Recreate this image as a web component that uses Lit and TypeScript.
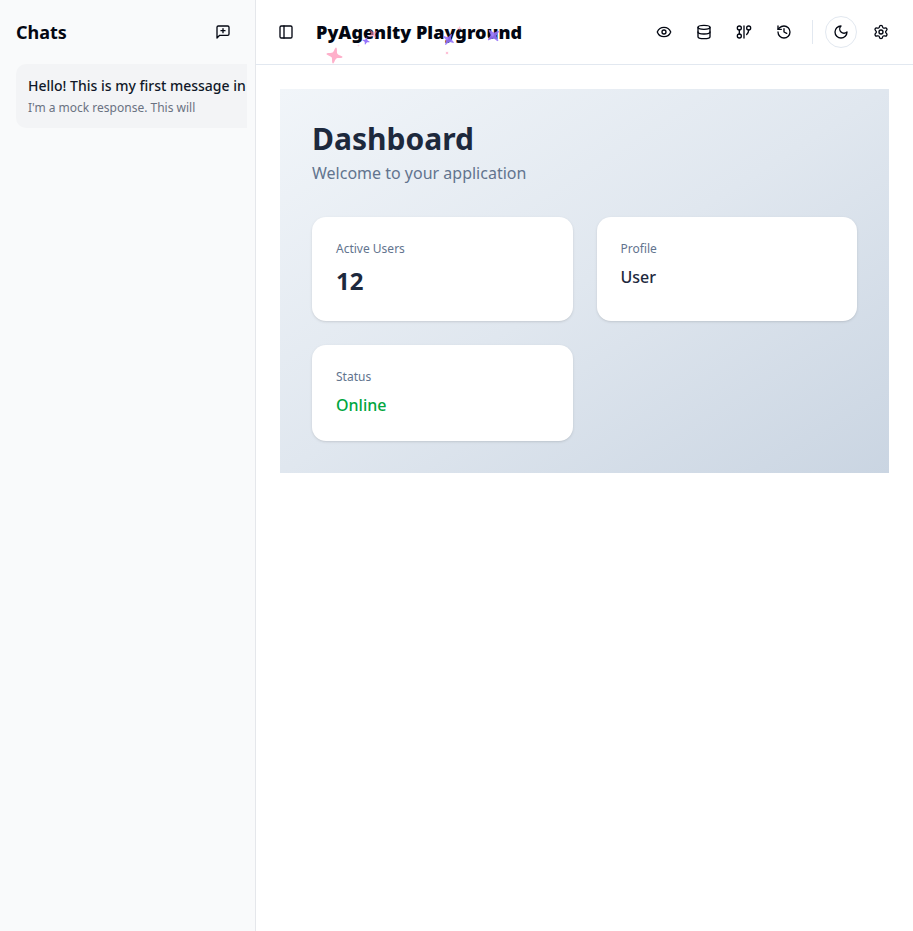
import { LitElement, html, css, svg } from "lit";
import { customElement } from "lit/decorators.js";
import { styleMap } from "lit/directives/style-map.js";

const icons = {
  newChat: svg`<path d="M21 15a2 2 0 0 1-2 2H7l-4 4V5a2 2 0 0 1 2-2h14a2 2 0 0 1 2 2z"/><path d="M12 7v6"/><path d="M9 10h6"/>`,
  panel: svg`<rect width="18" height="18" x="3" y="3" rx="2"/><path d="M9 3v18"/>`,
  eye: svg`<path d="M2.062 12.348a1 1 0 0 1 0-.696 10.75 10.75 0 0 1 19.876 0 1 1 0 0 1 0 .696 10.75 10.75 0 0 1-19.876 0"/><circle cx="12" cy="12" r="3"/>`,
  database: svg`<ellipse cx="12" cy="5" rx="9" ry="3"/><path d="M3 5V19A9 3 0 0 0 21 19V5"/><path d="M3 12A9 3 0 0 0 21 12"/>`,
  graph: svg`<circle cx="5" cy="6" r="3"/><path d="M5 9v6"/><circle cx="5" cy="18" r="3"/><path d="M12 3v18"/><circle cx="19" cy="6" r="3"/><path d="M16 15.7A9 9 0 0 0 19 9"/>`,
  history: svg`<path d="M3 12a9 9 0 1 0 9-9 9.75 9.75 0 0 0-6.74 2.74L3 8"/><path d="M3 3v5h5"/><path d="M12 7v5l4 2"/>`,
  moon: svg`<path d="M12 3a6 6 0 0 0 9 9 9 9 0 1 1-9-9Z"/>`,
  settings: svg`<path d="M9.671 4.136a2.34 2.34 0 0 1 4.659 0 2.34 2.34 0 0 0 3.319 1.915 2.34 2.34 0 0 1 2.33 4.033 2.34 2.34 0 0 0 0 3.831 2.34 2.34 0 0 1-2.33 4.033 2.34 2.34 0 0 0-3.319 1.915 2.34 2.34 0 0 1-4.659 0 2.34 2.34 0 0 0-3.32-1.915 2.34 2.34 0 0 1-2.33-4.033 2.34 2.34 0 0 0 0-3.831A2.34 2.34 0 0 1 6.35 6.051a2.34 2.34 0 0 0 3.319-1.915"/><circle cx="12" cy="12" r="3"/>`,
};

const icon = (name: keyof typeof icons) => html`
  <svg class="icon" viewBox="0 0 24 24" aria-hidden="true">${icons[name]}</svg>
`;

const STAR =
  "M9.82531 0.843845C10.0553 0.215178 10.9446 0.215178 11.1746 0.843845L11.8618 2.72026C12.4006 4.19229 12.3916 6.39157 13.5 7.5C14.6084 8.60843 16.8077 8.59935 18.2797 9.13822L20.1561 9.82534C20.7858 10.0553 20.7858 10.9447 20.1561 11.1747L18.2797 11.8618C16.8077 12.4007 14.6084 12.3916 13.5 13.5C12.3916 14.6084 12.4006 16.8077 11.8618 18.2798L11.1746 20.1562C10.9446 20.7858 10.0553 20.7858 9.82531 20.1562L9.13819 18.2798C8.59932 16.8077 8.60843 14.6084 7.5 13.5C6.39157 12.3916 4.19225 12.4007 2.72023 11.8618L0.843814 11.1747C0.215148 10.9447 0.215148 10.0553 0.843814 9.82534L2.72023 9.13822C4.19225 8.59935 6.39157 8.60843 7.5 7.5C8.60843 6.39157 8.59932 4.19229 9.13819 2.72026L9.82531 0.843845Z";

// Centre of each sparkle relative to the title, with its size, turn and colour.
const sparkles = [
  { x: 18, y: 37, size: 17, turn: 12, color: "#fe8fb5", opacity: 0.7 },
  { x: 50, y: 23, size: 8, turn: 15, color: "#9674fa", opacity: 1 },
  { x: 57, y: 16, size: 10, turn: 55, color: "#fe8fb5", opacity: 0.6 },
  { x: 42, y: 27, size: 3, turn: 20, color: "#fe8fb5", opacity: 0.4 },
  { x: 132, y: 21, size: 13, turn: 30, color: "#9674fa", opacity: 0.9 },
  { x: 143, y: 10, size: 5, turn: 10, color: "#fe8fb5", opacity: 0.5 },
  { x: 131, y: 35, size: 4, turn: 45, color: "#fe8fb5", opacity: 0.6 },
  { x: 177, y: 17, size: 15, turn: 50, color: "#9674fa", opacity: 0.9 },
];

@customElement("app-root")
export class AppRoot extends LitElement {
  static styles = css`
    :host {
      display: flex;
      min-height: 100vh;
      background: #fff;
      color: #030712;
      font-family: "Noto Sans", sans-serif;
      font-size: 16px;
      line-height: 24px;
    }
    * { box-sizing: border-box; }
    h1, h2, h3, p, dl, dt, dd { margin: 0; }
    button {
      display: flex;
      align-items: center;
      justify-content: center;
      width: 32px;
      height: 32px;
      padding: 0;
      border: 0;
      border-radius: 8px;
      background: none;
      color: inherit;
      font: inherit;
      cursor: pointer;
    }
    .icon {
      width: 16px;
      height: 16px;
      fill: none;
      stroke: currentColor;
      stroke-width: 2;
      stroke-linecap: round;
      stroke-linejoin: round;
    }
    .sidebar {
      flex: none;
      width: 256px;
      border-right: 1px solid #e5e7eb;
      background: #f9fafb;
    }
    .sidebar-head {
      display: flex;
      align-items: center;
      justify-content: space-between;
      height: 64px;
      padding: 0 16px;
    }
    .sidebar-title { font-size: 18px; line-height: 28px; font-weight: 700; }
    .chats { margin: 0 8px 0 16px; overflow: hidden; }
    .chat {
      display: block;
      width: 288px;
      padding: 12px;
      border-radius: 10px;
      background: #f3f4f6;
      text-decoration: none;
      white-space: nowrap;
    }
    .chat-title { display: block; color: #101828; font-size: 14px; line-height: 20px; font-weight: 500; }
    .chat-text { display: block; margin-top: 4px; color: #6a7282; font-size: 12px; line-height: 16px; }
    .main { flex: 1; min-width: 0; }
    .topbar {
      display: flex;
      align-items: center;
      height: 65px;
      padding: 0 16px 0 14px;
      border-bottom: 1px solid #e2e8f0;
    }
    .title {
      position: relative;
      margin-left: 14px;
      font-size: 18px;
      line-height: 28px;
      font-weight: 900;
      white-space: nowrap;
    }
    .sparkle { position: absolute; pointer-events: none; }
    .actions { display: flex; align-items: center; gap: 8px; margin-left: auto; }
    .divider { width: 1px; height: 24px; margin: 0 4px; background: #e2e8f0; }
    .round { border: 1px solid #e2e8f0; border-radius: 50%; }
    .content { padding: 24px; }
    .dashboard {
      padding: 32px;
      background: linear-gradient(to bottom right, #f1f5f9, #e0e7ef, #cad5e2);
    }
    .heading { color: #1d293d; font-size: 30px; line-height: 36px; font-weight: 700; }
    .subtitle { margin-top: 4px; color: #62748e; }
    .cards {
      display: grid;
      grid-template-columns: repeat(2, minmax(0, 1fr));
      gap: 24px;
      margin-top: 32px;
    }
    .card {
      padding: 24px;
      border-radius: 14px;
      background: #fff;
      box-shadow: 0 1px 3px rgba(0, 0, 0, 0.1), 0 1px 2px -1px rgba(0, 0, 0, 0.1);
    }
    .label { color: #62748e; font-size: 12px; line-height: 16px; }
    .value { margin-top: 8px; color: #1d293d; font-weight: 500; }
    .number { font-size: 24px; line-height: 32px; font-weight: 700; }
    .online { color: #00a63e; }
  `;

  render() {
    return html`
      <aside class="sidebar">
        <div class="sidebar-head">
          <h2 class="sidebar-title">Chats</h2>
          <button aria-label="New chat">${icon("newChat")}</button>
        </div>
        <nav class="chats" aria-label="Chats">
          <a class="chat" href="#chat">
            <span class="chat-title">Hello! This is my first message in</span>
            <span class="chat-text">I'm a mock response. This will</span>
          </a>
        </nav>
      </aside>
      <div class="main">
        <header class="topbar">
          <button aria-label="Toggle sidebar">${icon("panel")}</button>
          <h1 class="title">
            PyAgenity Playground
            ${sparkles.map(
              (s) => html`<svg
                class="sparkle"
                viewBox="0 0 21 21"
                width=${s.size}
                height=${s.size}
                aria-hidden="true"
                style=${styleMap({
                  left: `calc(${s.x}px - ${s.size}px / 2)`,
                  top: `calc(${s.y}px - ${s.size}px / 2)`,
                  transform: `rotate(${s.turn}deg)`,
                  opacity: String(s.opacity),
                })}
              ><path d=${STAR} fill=${s.color}></path></svg>`
            )}
          </h1>
          <div class="actions">
            <button aria-label="View">${icon("eye")}</button>
            <button aria-label="Data">${icon("database")}</button>
            <button aria-label="Graph">${icon("graph")}</button>
            <button aria-label="History">${icon("history")}</button>
            <span class="divider"></span>
            <button class="round" aria-label="Dark mode">${icon("moon")}</button>
            <button aria-label="Settings">${icon("settings")}</button>
          </div>
        </header>
        <main class="content">
          <section class="dashboard">
            <h2 class="heading">Dashboard</h2>
            <p class="subtitle">Welcome to your application</p>
            <dl class="cards">
              <div class="card">
                <dt class="label">Active Users</dt>
                <dd class="value number">12</dd>
              </div>
              <div class="card">
                <dt class="label">Profile</dt>
                <dd class="value">User</dd>
              </div>
              <div class="card">
                <dt class="label">Status</dt>
                <dd class="value online">Online</dd>
              </div>
            </dl>
          </section>
        </main>
      </div>
    `;
  }
}
